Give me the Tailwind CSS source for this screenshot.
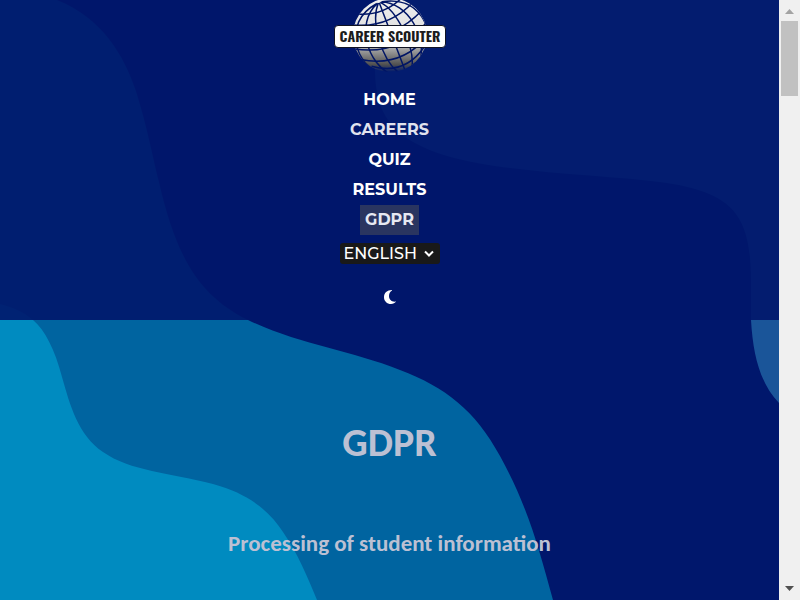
<!DOCTYPE html>
<html lang="en">
<head>
<meta charset="utf-8">
<meta name="viewport" content="width=device-width, initial-scale=1">
<title>Career Scouter – GDPR</title>
<script src="https://cdn.jsdelivr.net/npm/@tailwindcss/browser@4"></script>
</head>
<body class="flex h-screen overflow-hidden bg-[#00176c]">
<div class="relative isolate min-w-0 flex-1 overflow-hidden">
  <!-- Wave background -->
  <svg class="absolute inset-0 -z-10 h-full w-full" viewBox="0 0 779 600" preserveAspectRatio="none" aria-hidden="true">
    <path fill="#0064a0" d="M0 0H57C102 18 124 55 136 91C148 130 152 154 159 182C177 260 200 296 248 320C300 345 350 350 400 370C445 387 475 410 500 456C527 505 538 545 553 600H0Z"/>
    <path fill="#008bc0" d="M0 304C13 307 24 312 33 320C45 330 55 350 62 377C70 405 78 435 103 452C130 471 170 473 213 484C250 494 270 512 283 532C298 554 307 576 317 600H0Z"/>
    <path fill="#1a5599" d="M382 0C376 30 374 50 375 72C376 110 388 138 447 156C510 174 600 174 667 183C735 194 751 216 751 283V320C753 355 760 383 779 403V0Z"/>
  </svg>

  <header class="flex flex-col items-center bg-[#00166b]/90 pb-4">
    <a href="#" aria-label="Career Scouter">
      <svg class="block" width="112" height="72" viewBox="0 0 112 72">
        <defs>
          <linearGradient id="globe" x1="0" y1="0" x2="0" y2="1">
            <stop offset="0" stop-color="#f0f0f0"/>
            <stop offset=".35" stop-color="#e4e4e4"/>
            <stop offset=".65" stop-color="#b4b4b4"/>
            <stop offset=".9" stop-color="#505050"/>
            <stop offset="1" stop-color="#001a6e"/>
          </linearGradient>
          <clipPath id="ball"><circle cx="56" cy="35" r="37"/></clipPath>
        </defs>
        <circle cx="56" cy="35" r="37" fill="url(#globe)"/>
        <g clip-path="url(#ball)" fill="none" stroke="#001565" stroke-width="1.5">
          <g transform="rotate(-20 56 35)">
            <path d="M32 4Q56 15 80 4M23 12Q56 29 89 12M18 23Q56 42 94 23M18 36Q56 57 94 36M20 48Q56 70 92 48M28 58Q56 78 84 58"/>
            <path d="M54 1C14 7 13 53 36 71M55 1C27 12 25 55 44 73M56 1C42 16 40 55 51 73M57 1C57 16 58 54 58 73M58 1C71 14 75 54 66 72M59 1C84 10 90 50 75 70M60 1C97 8 100 45 84 64"/>
          </g>
        </g>
        <rect x="0.500" y="25.500" width="111" height="22" rx="3.500" fill="#fff" stroke="#101322"/>
        <text x="56" y="42" text-anchor="middle" fill="#1c1c1c" class="font-[Oswald,'Roboto_Condensed',Roboto,sans-serif] text-[14px] font-bold">CAREER SCOUTER</text>
      </svg>
    </a>
    <nav class="mt-[13px] flex flex-col items-center font-[Montserrat,Inter,sans-serif] text-base leading-[30px] font-bold text-white" aria-label="Main">
      <a href="#" class="px-[5px]">HOME</a>
      <a href="#" class="px-[5px] text-[#e0e3ee]">CAREERS</a>
      <a href="#" class="px-[5px]">QUIZ</a>
      <a href="#" class="px-[5px]">RESULTS</a>
      <a href="#" class="bg-[#2a3560] px-[5px] text-[#e6e8f2]" aria-current="page">GDPR</a>
    </nav>
    <div class="relative mt-2">
      <select aria-label="Language" class="block h-[21px] w-[100px] appearance-none rounded-[3px] bg-[#191919] pl-1 font-[Montserrat,Inter,sans-serif] text-base leading-[21px] font-medium text-white">
        <option>ENGLISH</option>
      </select>
      <svg class="pointer-events-none absolute top-[7px] right-[6px]" width="10" height="8" viewBox="0 0 10 8" fill="none" stroke="#fff" stroke-width="2" aria-hidden="true"><path d="M1 1.500L5 5.500L9 1.500"/></svg>
    </div>
    <button type="button" aria-label="Toggle dark mode" class="mt-[26px] block">
      <svg class="block" width="12" height="14" viewBox="0 0 12 14" fill="#fff" aria-hidden="true"><path d="M8 0C3 0 0 3 0 7.200C0 11 3 14 7 14C9.200 14 11 13 12 11.500C8 12.300 5 9.800 5 6C5 3.500 6 1.400 8 .4Z"/></svg>
    </button>
  </header>

  <main class="flex flex-col items-center px-4 pt-[98px] text-center font-[Calibri,Carlito,Lato,sans-serif] font-bold text-[#bcc0d3]">
    <h1 class="text-[40px] leading-[50px]">GDPR</h1>
    <h2 class="mt-[61px] text-[23px] leading-7">Processing of student information</h2>
  </main>
</div>

<!-- Page scroll track -->
<div class="flex w-[21px] shrink-0 flex-col items-center bg-[#f0f0f0]" aria-hidden="true">
  <svg class="block shrink-0" width="21" height="21" viewBox="0 0 21 21" fill="#a3a3a3"><path d="M6 14H15L10.500 9Z"/></svg>
  <div class="h-[75px] w-[17px] bg-[#c1c1c1]"></div>
  <svg class="mt-auto block shrink-0" width="21" height="21" viewBox="0 0 21 21" fill="#505050"><path d="M6 7H15L10.500 12Z"/></svg>
</div>
</body>
</html>
